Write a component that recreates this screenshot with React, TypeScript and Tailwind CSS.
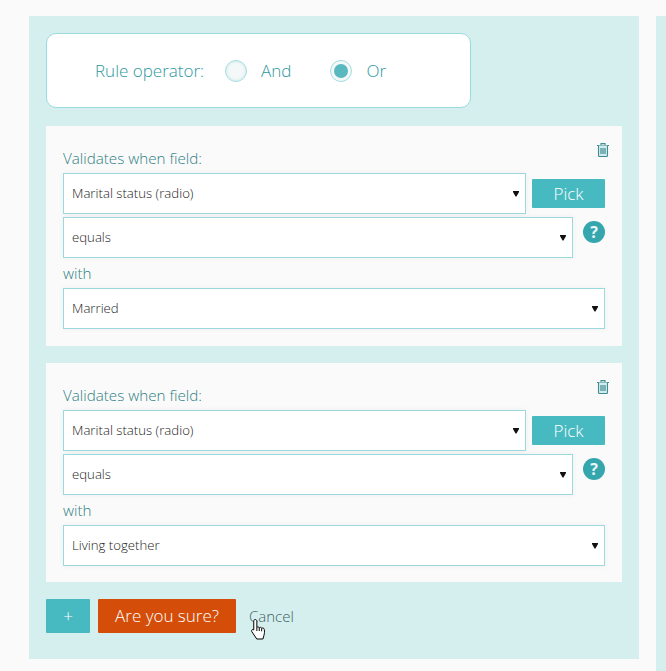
import React from "react";

const conditions = [
  { field: "Marital status (radio)", op: "equals", value: "Married" },
  { field: "Marital status (radio)", op: "equals", value: "Living together" },
];

function Caret() {
  return (
    <svg width="6" height="7" viewBox="0 0 6 7" className="shrink-0" fill="#111">
      <path d="M0 1h6v1L3.500 6.500h-1L0 2z" />
    </svg>
  );
}

function FakeSelect({ label, className }: { label: string; className: string }) {
  return (
    <div
      className={`flex h-[41px] items-center justify-between border border-[#9ad9de] bg-white pl-2 pr-[6px] text-[13.2px] text-[#1c1c1c] shadow-[0_0_6px_rgba(0,0,0,0.05)] ${className}`}
    >
      <span>{label}</span>
      <Caret />
    </div>
  );
}

function TrashIcon() {
  return (
    <svg width="14" height="15" viewBox="0 0 14 15" fill="none" stroke="#3f8d92" strokeWidth="1.1">
      <path d="M1 3.500h12M5 3.500V1.600h4v1.900" />
      <path d="M2.500 3.500v10a1 1 0 0 0 1 1h7a1 1 0 0 0 1-1v-10" fill="#d5ecee" />
      <path d="M5 6v6M7 6v6M9 6v6" strokeWidth="1.2" />
    </svg>
  );
}

function HandCursor() {
  return (
    <svg width="17" height="22" viewBox="1 1 14.500 22" className="absolute left-px top-[14px]">
      <path
        d="M5 1.500c1 0 1.600.7 1.600 1.700v6.300c.4-.8 2-.8 2.400.3.500-.8 2.100-.6 2.400.5.700-.6 2.400-.4 2.600 1 .4 2 .3 4-.3 6l-1 3.700H6.500L1.500 13.500c-.8-1.300.8-2.600 2-1.600V3.200c0-1 .6-1.700 1.500-1.700z"
        fill="#fff"
        stroke="#000"
        strokeWidth="1"
        strokeLinejoin="round"
      />
      <path d="M6.600 9.500v3.500M9 10v3M11.400 10.500v2.800" stroke="#000" strokeWidth="1" />
    </svg>
  );
}

function ConditionCard({ field, op, value, tall }: { field: string; op: string; value: string; tall: boolean }) {
  return (
    <div className={`relative bg-[#fafafa] px-[17px] pt-[23px] ${tall ? "h-[220px]" : "h-[219px]"}`}>
      <button className="absolute right-[12px] top-[16px]">
        <TrashIcon />
      </button>
      <div className="text-[15.2px] leading-[19px] text-[#2f7f84]">Validates when field:</div>
      <div className="mt-[5px] flex gap-[6px]">
        <FakeSelect label={field} className="w-[463px]" />
        <div className="mt-[6px] flex h-[29px] w-[73px] items-center justify-center rounded-[1px] bg-[#47bac1] text-[17px] text-white">
          Pick
        </div>
      </div>
      <div className="mt-[3px] flex">
        <FakeSelect label={op} className="w-[510px]" />
        <div className="ml-[10px] mt-[4px] flex h-[22px] w-[22px] items-center justify-center rounded-full bg-[#36a6ae] text-[16px] font-bold text-[#eaf7f8]">
          ?
        </div>
      </div>
      <div className="mt-[6px] text-[15.2px] leading-[19px] text-[#2f7f84]">with</div>
      <FakeSelect label={value} className="mt-[5px] w-[542px]" />
    </div>
  );
}

export default function App() {
  return (
    <div
      className="flex h-[671px] w-[666px] overflow-hidden bg-[#fafafa] pt-4 font-light"
      style={{ fontFamily: "'Open Sans', sans-serif" }}
    >
      <div className="ml-[29px] h-[643px] w-[610px] shrink-0 bg-[#d5efef] px-[17px] pt-[17px]">
        <div className="flex h-[75px] w-[425px] items-center rounded-[10px] border border-[#9adbdf] bg-white pl-[48px] text-[17px] text-[#2f98a0]">
          <span>Rule operator:</span>
          <span className="ml-[21px] h-[22px] w-[22px] rounded-full border border-[#a5dde0] bg-[#f4f8f8] shadow-[inset_0_0_3px_rgba(120,200,205,0.4)]" />
          <span className="ml-[14px]">And</span>
          <span className="ml-[39px] flex h-[22px] w-[22px] items-center justify-center rounded-full border border-[#a5dde0] bg-[#f4f8f8]">
            <span className="h-[14px] w-[14px] rounded-full bg-[#5ab8c0]" />
          </span>
          <span className="ml-[14px]">Or</span>
        </div>
        <div className="mt-[18px] flex flex-col gap-[17px]">
          {conditions.map((c, i) => (
            <ConditionCard key={i} field={c.field} op={c.op} value={c.value} tall={i === 0} />
          ))}
        </div>
        <div className="mt-[17px] flex items-center">
          <div className="flex h-[34px] w-[44px] items-center justify-center rounded-[1px] bg-[#47bac1] text-[17px] text-white">
            +
          </div>
          <div className="ml-2 flex h-[34px] w-[138px] items-center justify-center rounded-[1px] bg-[#d44e0a] text-[17px] text-white">
            Are you sure?
          </div>
          <div className="relative ml-[13px] text-[15px] text-[#3d5f62]">
            Cancel
            <HandCursor />
          </div>
        </div>
      </div>
      <div className="ml-[17px] h-full flex-1 bg-[#d5efef]" />
    </div>
  );
}
